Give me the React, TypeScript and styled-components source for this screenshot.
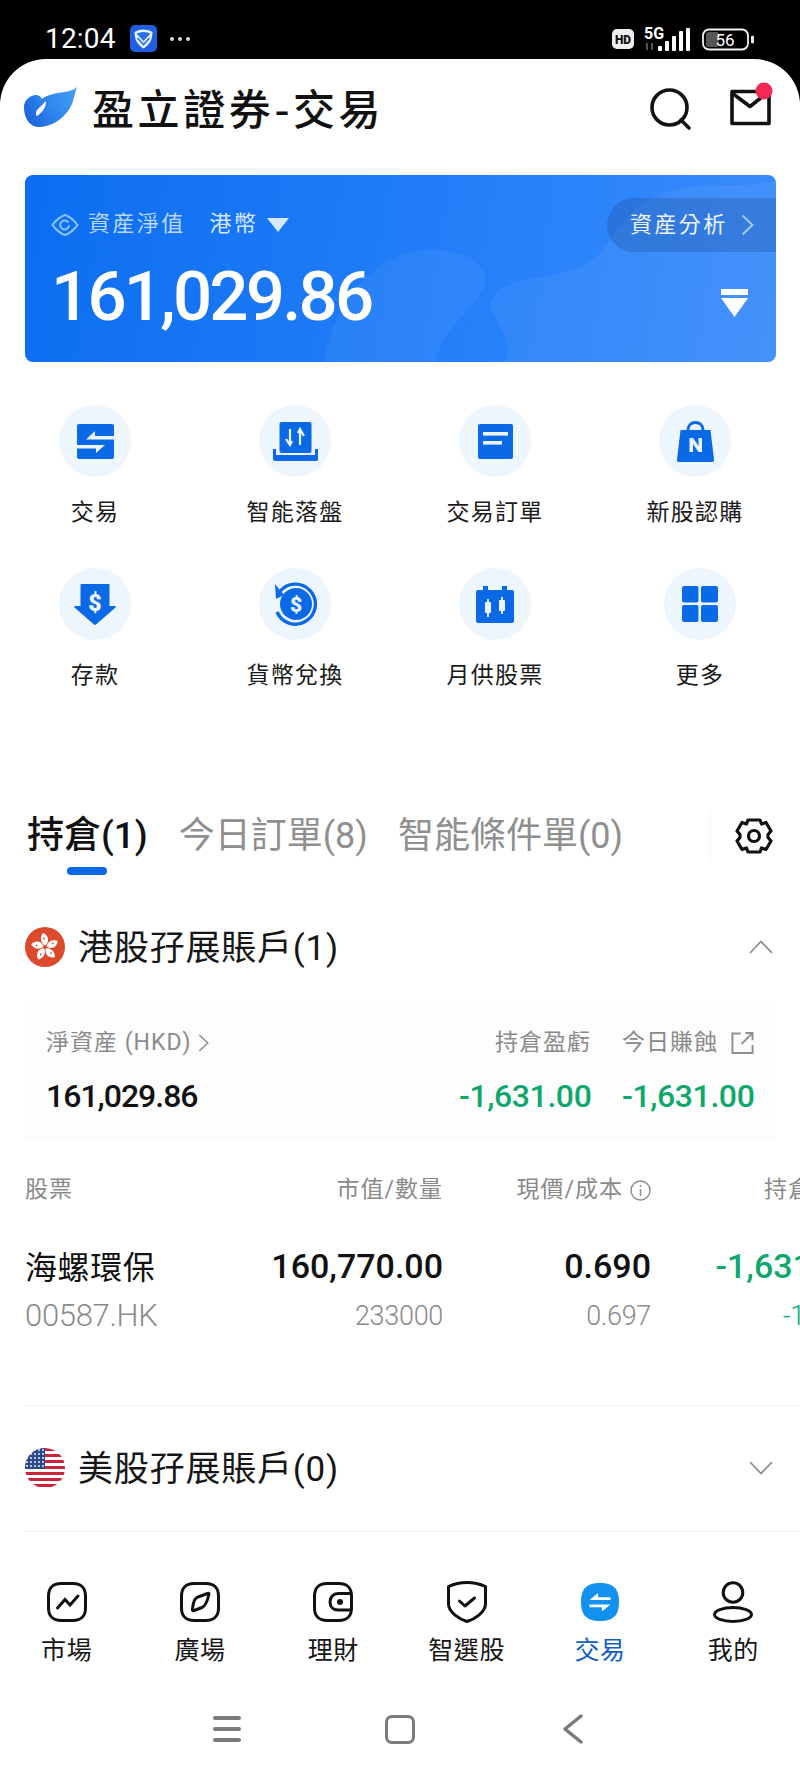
import React from 'react';
import styled, { createGlobalStyle } from 'styled-components';

const BLUE = '#0a6ae6';
const GREY = '#8a8a8a';
const GREEN = '#0fa76b';

const GlobalStyle = createGlobalStyle`
  html, body {
    margin: 0;
    padding: 0;
    background: #000;
  }
  * {
    box-sizing: border-box;
  }
`;

// Page frame

const Page = styled.div`
  width: 800px;
  height: 1778px;
  overflow: hidden;
  background: #000;
  color: #111;
  font-family: Roboto, 'Noto Sans CJK TC', sans-serif;
`;

const StatusBar = styled.div`
  height: 59px;
  padding: 25px 46px 0 45px;
  display: flex;
  align-items: flex-start;
  color: #fff;
`;

const Clock = styled.span`
  font-size: 28px;
  line-height: 28px;
  letter-spacing: 0.2px;
`;

const StatusDots = styled.span`
  display: flex;
  gap: 4px;
  margin: 12px 0 0 13px;
  & > i {
    width: 4px;
    height: 4px;
    border-radius: 50%;
    background: #ddd;
  }
`;

const StatusRight = styled.div`
  margin-left: auto;
  display: flex;
  align-items: flex-start;
`;

const Panel = styled.div`
  height: 1719px;
  background: #fff;
  border-radius: 46px 46px 0 0;
  padding: 0 24px;
`;

// Header

const Header = styled.header`
  height: 116px;
  display: flex;
  align-items: flex-start;
  padding-top: 28px;
`;

const AppTitle = styled.h1`
  margin: -3px 0 0 14px;
  font-family: 'Noto Sans CJK TC', sans-serif;
  font-size: 42px;
  line-height: 46px;
  font-weight: 500;
  letter-spacing: 3.6px;
  color: #111;
`;

const HeaderIcons = styled.div`
  margin-left: auto;
  display: flex;
  gap: 37px;
  align-items: flex-start;
`;

// Balance card

const Card = styled.section`
  position: relative;
  height: 187px;
  margin: 0 0 0 1px;
  width: 751px;
  border-radius: 8px;
  overflow: hidden;
  background: linear-gradient(100deg, #0b6df0 0%, #2580f9 60%, #3a8cfb 100%);
  color: #fff;
  padding: 23px 28px 0 26px;
`;

const CardDecor = styled.svg`
  position: absolute;
  inset: 0;
`;

const CardContent = styled.div`
  position: relative;
  display: flex;
  flex-direction: column;
`;

const CardLabelRow = styled.div`
  display: flex;
  align-items: center;
  height: 54px;
  line-height: 50px;
`;

const CardLabel = styled.span`
  font-size: 22px;
  letter-spacing: 2.4px;
  color: #b8d8ff;
  margin: -2px 0 0 9px;
`;

const Currency = styled.span`
  font-size: 22px;
  letter-spacing: 2.4px;
  color: #d6e8ff;
  margin: -2px 9px 0 24px;
`;

const AnalysisPill = styled.div`
  position: absolute;
  top: 0;
  right: -28px;
  width: 169px;
  height: 54px;
  border-radius: 27px 0 0 27px;
  background: rgba(30, 80, 160, 0.32);
  display: flex;
  align-items: center;
  padding-left: 23px;
  font-size: 22px;
  letter-spacing: 2.4px;
  color: #eef6ff;
  gap: 13px;
`;

const BalanceRow = styled.div`
  display: flex;
  align-items: center;
  justify-content: space-between;
  margin-top: 10px;
  height: 70px;
`;

const Balance = styled.div`
  font-size: 69px;
  line-height: 70px;
  letter-spacing: -2.8px;
  font-weight: 500;
`;

// Shortcuts

const ShortcutGrid = styled.div`
  display: grid;
  grid-template-columns: repeat(4, 200px);
  row-gap: 42px;
  margin: 43px 0 0 -29px;
`;

const Shortcut = styled.div<{ $nudge?: boolean }>`
  display: flex;
  flex-direction: column;
  align-items: center;
  gap: 17px;
  padding-left: ${(p) => (p.$nudge ? 10 : 0)}px;
`;

const ShortcutCircle = styled.div`
  width: 72px;
  height: 72px;
  border-radius: 50%;
  background: #eef6fd;
  display: flex;
  align-items: center;
  justify-content: center;
`;

const ShortcutLabel = styled.span`
  font-family: 'Noto Sans CJK TC', sans-serif;
  font-size: 23px;
  line-height: 32px;
  letter-spacing: 1.2px;
  color: #1a1a1a;
`;

// Tabs

const TabBar = styled.div`
  position: relative;
  display: flex;
  align-items: flex-start;
  margin-top: 123px;
  height: 63px;
  padding-left: 3px;
`;

const Tab = styled.div<{ $active?: boolean }>`
  display: flex;
  flex-direction: column;
  align-items: center;
  font-size: ${(p) => (p.$active ? 37 : 36)}px;
  line-height: 48px;
  font-weight: ${(p) => (p.$active ? 500 : 400)};
  color: ${(p) => (p.$active ? '#111' : '#8f8f8f')};
  margin-right: ${(p) => (p.$active ? 31 : 30)}px;
  white-space: nowrap;
`;

const TabMark = styled.i`
  width: 40px;
  height: 8px;
  border-radius: 4px;
  background: ${BLUE};
  margin-top: 7px;
`;

const TabSettings = styled.div`
  position: absolute;
  right: 0;
  top: -6px;
  width: 64px;
  height: 60px;
  background: #fff;
  box-shadow: -7px 0 8px -6px rgba(0, 0, 0, 0.05);
  display: flex;
  align-items: center;
  justify-content: flex-end;
  padding-right: 3px;
`;

// Account sections

const SectionHead = styled.div<{ $top: number }>`
  display: flex;
  align-items: center;
  height: 48px;
  margin-top: ${(p) => p.$top}px;
  padding-left: 1px;
`;

const SectionTitle = styled.span`
  font-size: 35px;
  line-height: 48px;
  margin: 3px 0 0 13px;
  letter-spacing: 0.8px;
  color: #161616;
`;

const SectionChevron = styled.svg`
  margin-left: auto;
  margin-right: 3px;
`;

const Summary = styled.div`
  margin-top: 29px;
  height: 140px;
  background: #fefdfe;
  padding: 27px 22px 0 22px;
  display: grid;
  grid-template-columns: 1fr 132px 132px;
  column-gap: 31px;
  row-gap: 17px;
  grid-template-rows: 32px 40px;
`;

const SummaryLabel = styled.div<{ $right?: boolean }>`
  font-size: 23px;
  line-height: 32px;
  letter-spacing: 1px;
  color: ${GREY};
  display: flex;
  align-items: center;
  white-space: nowrap;
  justify-content: ${(p) => (p.$right ? 'flex-end' : 'flex-start')};
  gap: 6px;
`;

const SummaryValue = styled.div<{ $green?: boolean }>`
  font-size: 32px;
  line-height: 40px;
  font-weight: 500;
  letter-spacing: ${(p) => (p.$green ? -0.4 : -1)}px;
  white-space: nowrap;
  text-align: ${(p) => (p.$green ? 'right' : 'left')};
  color: ${(p) => (p.$green ? GREEN : '#111')};
`;

// Holdings table

const Table = styled.div`
  margin: 35px -24px 0 0;
  overflow: hidden;
  display: grid;
  grid-template-columns: 201px 218px 208px 209px;
`;

const HeadCell = styled.div<{ $left?: boolean }>`
  font-size: 23px;
  line-height: 30px;
  letter-spacing: 1px;
  color: ${GREY};
  display: flex;
  align-items: center;
  justify-content: ${(p) => (p.$left ? 'flex-start' : 'flex-end')};
  white-space: nowrap;
  gap: 7px;
  padding-left: 1px;
`;

const MainCell = styled.div<{ $left?: boolean; $green?: boolean }>`
  margin-top: 39px;
  height: 44px;
  padding: ${(p) => (p.$left ? '2px 0 0 1px' : '0')};
  font-size: ${(p) => (p.$left ? 32 : 34)}px;
  line-height: 44px;
  font-weight: ${(p) => (p.$left ? 400 : 500)};
  letter-spacing: ${(p) => (p.$left ? 0.6 : 0)}px;
  text-align: ${(p) => (p.$left ? 'left' : 'right')};
  color: ${(p) => (p.$green ? GREEN : '#111')};
  white-space: nowrap;
`;

const SubCell = styled.div<{ $left?: boolean; $green?: boolean }>`
  margin-top: 10px;
  font-size: ${(p) => (p.$left ? 31 : 27)}px;
  line-height: 36px;
  font-weight: 300;
  letter-spacing: -0.3px;
  text-align: ${(p) => (p.$left ? 'left' : 'right')};
  color: ${(p) => (p.$green ? GREEN : GREY)};
  white-space: nowrap;
  padding-left: 1px;
`;

const Divider = styled.div<{ $top: number }>`
  height: 1px;
  margin: ${(p) => p.$top}px -24px 0 0;
  background: #f2f2f2;
`;

// Bottom navigation

const BottomNav = styled.nav`
  display: grid;
  grid-template-columns: repeat(6, 133.33px);
  margin: 50px 0 0 -24px;
`;

const NavItem = styled.div<{ $active?: boolean }>`
  display: flex;
  flex-direction: column;
  align-items: center;
  gap: 10px;
  font-family: 'Noto Sans CJK TC', sans-serif;
  font-size: 25px;
  line-height: 32px;
  letter-spacing: 0.6px;
  color: ${(p) => (p.$active ? '#1260bd' : '#161616')};
`;

const NavIcon = styled.div`
  height: 40px;
  display: flex;
  align-items: center;
  justify-content: center;
`;

const SystemBar = styled.div`
  margin: 50px 0 0 -24px;
  width: 800px;
  padding-left: 213px;
  display: flex;
  align-items: center;
`;

const MenuBars = styled.div`
  width: 28px;
  height: 26px;
  display: flex;
  flex-direction: column;
  justify-content: space-between;
  & > i {
    height: 4px;
    border-radius: 2px;
    background: #7a7a7a;
  }
`;

const HomeSquare = styled.div`
  width: 30px;
  height: 29px;
  margin-left: 144px;
  border: 3.5px solid #7a7a7a;
  border-radius: 7px;
`;

const BackArrow = styled.svg`
  margin-left: 148px;
`;

// Icon drawings

const ShieldSvg = styled.svg`
  margin-left: 14px;
`;

const StatusSvg = styled.svg`
  margin: 1px -2px 0 0;
`;

const MailSvg = styled.svg`
  margin: -5px -1px 0 0;
`;

const CollapseSvg = styled.svg`
  margin: 12px 0 0 0;
`;

const ExternalSvg = styled.svg`
  margin-left: 7px;
`;

function AppLogo() {
  return (
    <svg width="54" height="41" viewBox="0 0 54 41">
      <defs>
        <linearGradient id="lg" x1="0" y1="0.7" x2="1" y2="0.2">
          <stop offset="0" stopColor="#1c62da" />
          <stop offset="0.4" stopColor="#2c82ec" />
          <stop offset="1" stopColor="#429cf6" />
        </linearGradient>
      </defs>
      <path d="M0 20C0 13 6 8 12 8C15 8 17 10 18 12C23 8 32 6 40 5C46 4 50 3 53 0C50 8 50 16 44 24C36 35 24 40 15 40C6 40 0 32 0 20Z" fill="url(#lg)" />
      <path d="M22 14C22 19 20 24 13 29C11 28 12 24 14 22C16 20 19 17 22 14Z" fill="#fff" />
    </svg>
  );
}

function ShieldApp() {
  return (
    <ShieldSvg width="27" height="27" viewBox="0 0 27 27">
      <rect width="27" height="27" rx="5" fill="#1f5fe0" />
      <path d="M13.5 4.5C10 4.5 7 5.5 4.5 7C4.5 15 8 20.5 13.5 23.5C19 20.5 22.5 15 22.5 7C20 5.5 17 4.5 13.5 4.5Z" fill="#e6f3ff" />
      <path d="M6.5 8.5C11 6.5 16 6.5 20.5 8.5L13.5 16Z" fill="#2a6ee8" />
      <path d="M7.5 13L13.5 19.5L19.5 13" fill="none" stroke="#2a6ee8" strokeWidth="1.6" />
    </ShieldSvg>
  );
}

function StatusIcons() {
  return (
    <StatusSvg width="144" height="28" viewBox="0 0 144 28">
      <rect x="0" y="3" width="22" height="20" rx="5" fill="#eee" />
      <text x="11" y="17.5" fontSize="12" fontWeight="900" textAnchor="middle" fontFamily="Roboto" fill="#111">HD</text>
      <text x="32" y="13" fontSize="16" fontWeight="700" fontFamily="Roboto" fill="#fff">5G</text>
      <path d="M35 17v7M40 24v-7" stroke="#777" strokeWidth="1.4" />
      <rect x="46" y="20" width="4" height="5" rx="1" fill="#fff" />
      <rect x="53" y="15" width="4" height="10" rx="1" fill="#fff" />
      <rect x="60" y="10" width="4" height="15" rx="1" fill="#fff" />
      <rect x="67" y="5" width="4" height="20" rx="1" fill="#fff" />
      <rect x="74" y="2" width="4" height="23" rx="1" fill="#fff" />
      <rect x="91" y="3.5" width="45" height="20" rx="6" fill="none" stroke="#f2f2f2" strokeWidth="1.8" />
      <rect x="94" y="6" width="13" height="15" rx="2.5" fill="#555" />
      <text x="113" y="20" fontSize="17" textAnchor="middle" fontFamily="Roboto" fill="#fff">56</text>
      <rect x="139" y="9.5" width="3" height="8" rx="1.5" fill="#eee" />
    </StatusSvg>
  );
}

function SearchIcon() {
  return (
    <svg width="42" height="44" viewBox="0 0 42 44" fill="none" stroke="#111" strokeWidth="3.6" strokeLinecap="round">
      <circle cx="19.5" cy="20.5" r="17.5" />
      <path d="M31 33l8 8" />
    </svg>
  );
}

function MailIcon() {
  return (
    <MailSvg width="48" height="48" viewBox="0 0 48 48" fill="none">
      <path d="M3 9.5H40V41.5H3Z" stroke="#111" strokeWidth="3.6" strokeLinejoin="round" />
      <path d="M3 11L21 24.5L38 11" stroke="#111" strokeWidth="3.6" strokeLinejoin="round" />
      <circle cx="35" cy="9" r="8.5" fill="#f02a55" />
    </MailSvg>
  );
}

function EyeIcon() {
  return (
    <svg width="28" height="24" viewBox="0 0 28 24" fill="none" stroke="#8cc2ff" strokeWidth="2">
      <path d="M14 2C18 3 24 8 26.5 12C24 16 18 21 14 22C10 21 4 16 1.5 12C4 8 10 3 14 2Z" />
      <path d="M17 9A4.5 4.5 0 1 0 18 13" strokeLinecap="round" />
    </svg>
  );
}

function CaretDown() {
  return (
    <svg width="22" height="14" viewBox="0 0 22 14">
      <path d="M0 0H22L11 14Z" fill="#d7e9ff" />
    </svg>
  );
}

function ChevronRight({ color = '#a9cdfb', w = 13, h = 22 }: { color?: string; w?: number; h?: number }) {
  return (
    <svg width={w} height={h} viewBox="0 0 13 22" fill="none" stroke={color} strokeWidth="1.8">
      <path d="M1.5 1.5L11.5 11L1.5 20.5" />
    </svg>
  );
}

function CollapseIcon() {
  return (
    <CollapseSvg width="27" height="28" viewBox="0 0 27 28">
      <rect x="0" y="0" width="27" height="6" fill="#fff" />
      <path d="M0 9H27L13.5 28Z" fill="#fff" />
    </CollapseSvg>
  );
}

function TradeIcon() {
  return (
    <svg width="37" height="35" viewBox="0 0 37 35">
      <rect width="37" height="35" rx="2" fill={BLUE} />
      <path d="M9 15.5L18 7V12H37V15.5Z" fill="#eef6fd" />
      <path d="M0 21H28L19 29V24.5H0Z" fill="#eef6fd" />
    </svg>
  );
}

function SmartIcon() {
  return (
    <svg width="45" height="39" viewBox="0 0 45 39">
      <rect x="6.5" y="0" width="32" height="31" rx="2" fill={BLUE} />
      <path d="M0 27H3V33H42V27H45V37A2 2 0 0 1 43 39H2A2 2 0 0 1 0 37Z" fill={BLUE} />
      <path d="M17 7V22M13 17L17 23L19 19M27 23V8M31 14L27 7L25 11" fill="none" stroke="#eef6fd" strokeWidth="2.2" />
    </svg>
  );
}

function OrderIcon() {
  return (
    <svg width="35" height="35" viewBox="0 0 35 35">
      <rect width="35" height="35" rx="2" fill={BLUE} />
      <rect x="5" y="8" width="25" height="3.6" fill="#eef6fd" />
      <rect x="5" y="17" width="19" height="3.6" fill="#eef6fd" />
    </svg>
  );
}

function BagIcon() {
  return (
    <svg width="37" height="41" viewBox="0 0 37 41">
      <path d="M11 9C11 -1 26 -1 26 9" fill="none" stroke={BLUE} strokeWidth="3" />
      <path d="M3.5 9H33.5L37 38.5A2 2 0 0 1 35 41H2A2 2 0 0 1 0 38.5Z" fill={BLUE} />
      <path d="M12.5 31V17H16L21.5 25V17H25V31H21.5L16 23V31Z" fill="#eef6fd" />
    </svg>
  );
}

function DepositIcon() {
  return (
    <svg width="42" height="41" viewBox="0 0 42 41">
      <path d="M6.5 1A1 1 0 0 1 7.5 0H34.5A1 1 0 0 1 35.5 1V22H41C42 22 42 23 41.5 23.5L22 40.5C21.5 41 20.5 41 20 40.5L0.5 23.5C0 23 0 22 1 22H6.5Z" fill={BLUE} />
      <text x="21" y="27" fontSize="23" fontWeight="900" textAnchor="middle" fontFamily="Roboto" fill="#eef6fd">$</text>
    </svg>
  );
}

function ExchangeIcon() {
  return (
    <svg width="44" height="44" viewBox="0 0 44 44">
      <circle cx="23" cy="22" r="16" fill={BLUE} />
      <path d="M6.5 10A20 20 0 1 1 4 30" fill="none" stroke={BLUE} strokeWidth="3.4" />
      <path d="M2 2L3 17L11 13Z" fill={BLUE} />
      <text x="23" y="29.5" fontSize="21" fontWeight="900" textAnchor="middle" fontFamily="Roboto" fill="#eef6fd">$</text>
    </svg>
  );
}

function MonthlyIcon() {
  return (
    <svg width="38" height="37" viewBox="0 0 38 37">
      <rect x="7" y="0" width="5" height="6" fill={BLUE} />
      <rect x="26" y="0" width="5" height="6" fill={BLUE} />
      <rect x="0" y="4" width="38" height="33" rx="2" fill={BLUE} />
      <path d="M12 13V31M26 11V28" stroke="#eef6fd" strokeWidth="1.8" />
      <rect x="9" y="16" width="6" height="11" rx="1" fill="#eef6fd" />
      <rect x="23" y="14" width="6" height="11" rx="1" fill="#eef6fd" />
    </svg>
  );
}

function MoreIcon() {
  return (
    <svg width="36" height="36" viewBox="0 0 36 36" fill={BLUE}>
      <rect width="16.5" height="16.5" rx="2" />
      <rect x="19" width="17" height="16.5" rx="2" />
      <rect y="19" width="16.5" height="17" rx="2" />
      <rect x="19" y="19" width="17" height="17" rx="2" />
    </svg>
  );
}

function GearIcon() {
  return (
    <svg width="38" height="38" viewBox="0 0 38 38" fill="none" stroke="#111" strokeWidth="3.2" strokeLinejoin="round">
      <path d="M13 3H25L26.5 7L31 5.5L36 14L33 17.5V20.5L36 24L31 32.5L26.5 31L25 35H13L11.5 31L7 32.5L2 24L5 20.5V17.5L2 14L7 5.5L11.5 7Z" />
      <circle cx="19" cy="19" r="5.5" />
    </svg>
  );
}

function HkFlag() {
  const petals = [0, 72, 144, 216, 288];
  return (
    <svg width="40" height="40" viewBox="0 0 40 40">
      <circle cx="20" cy="20" r="20" fill="#dc4a2e" />
      {petals.map((a) => (
        <g key={a} transform={`rotate(${a} 20 20)`}>
          <path d="M20 18.5C15.5 16 14.5 10.5 18 6C22.5 8 24.5 12 22 16.5Z" fill="#fff" />
          <circle cx="19" cy="11.5" r="0.9" fill="#dc4a2e" />
        </g>
      ))}
    </svg>
  );
}

function UsFlag() {
  const stripes = [0, 1, 2, 3, 4, 5, 6];
  return (
    <svg width="40" height="40" viewBox="0 0 40 40">
      <defs>
        <clipPath id="usclip">
          <circle cx="20" cy="20" r="20" />
        </clipPath>
        <pattern id="stars" width="4" height="4" patternUnits="userSpaceOnUse">
          <circle cx="2" cy="2" r="0.9" fill="#fff" />
        </pattern>
      </defs>
      <g clipPath="url(#usclip)">
        <rect width="40" height="40" fill="#fff" />
        {stripes.map((i) => (
          <rect key={i} y={i * 6} width="40" height="3" fill="#c8243c" />
        ))}
        <rect width="20" height="21" fill="#2a4a8c" />
        <rect width="20" height="21" fill="url(#stars)" />
      </g>
    </svg>
  );
}

function ChevronUpDown({ up }: { up?: boolean }) {
  return (
    <SectionChevron width="24" height="14" viewBox="0 0 24 14" fill="none" stroke="#8c8c8c" strokeWidth="1.8">
      <path d={up ? 'M1 13L12 1.5L23 13' : 'M1 1L12 12.5L23 1'} />
    </SectionChevron>
  );
}

function ExternalIcon() {
  return (
    <ExternalSvg width="24" height="24" viewBox="0 0 24 24" fill="none" stroke="#8f8f8f" strokeWidth="2">
      <path d="M10 2H1.5V22.5H22.5V14" />
      <path d="M11 13L22.5 1.5M15 1.5H22.5V9" />
    </ExternalSvg>
  );
}

function InfoIcon() {
  return (
    <svg width="21" height="21" viewBox="0 0 21 21" fill="none" stroke="#8f8f8f" strokeWidth="1.5">
      <circle cx="10.5" cy="10.5" r="9.5" />
      <path d="M10.5 9V16M10.5 5V7" />
    </svg>
  );
}

const NavStroke = { fill: 'none', stroke: '#111', strokeWidth: 3 };
const ROUNDED = 'M14 1.5H26C34 1.5 38.5 6 38.5 14V26C38.5 34 34 38.5 26 38.5H14C6 38.5 1.5 34 1.5 26V14C1.5 6 6 1.5 14 1.5Z';
const SQUIRCLE = 'M20 0C33 0 40 5 40 20C40 35 33 40 20 40C7 40 0 35 0 20C0 5 7 0 20 0Z';

function NavMarket() {
  return (
    <svg width="40" height="40" viewBox="0 0 40 40" {...NavStroke}>
      <path d={ROUNDED} />
      <path d="M10.5 26L18 17.5L23 23L31 14" strokeLinecap="round" />
    </svg>
  );
}

function NavSquare() {
  return (
    <svg width="40" height="40" viewBox="0 0 40 40" {...NavStroke}>
      <path d={ROUNDED} />
      <path d="M29 12C29 11 28.5 11 27.5 11.5L18 15C15 16 14 18 12.5 26C12 28 12.5 29 14 28.5L22 25.5C25 24.5 27 21 29 12Z" strokeLinejoin="round" />
    </svg>
  );
}

function NavWealth() {
  return (
    <svg width="40" height="40" viewBox="0 0 40 40" {...NavStroke}>
      <path d={ROUNDED} />
      <path d="M38.5 11.5H25C20.5 11.5 17 15 17 20C17 25 20.5 28 25 28H38.5" />
      <circle cx="27" cy="20" r="3" fill="#111" stroke="none" />
    </svg>
  );
}

function NavPicks() {
  return (
    <svg width="40" height="42" viewBox="0 0 40 42" {...NavStroke}>
      <path d="M20 1.5C26 1.5 33 3 38.5 5.5V23C38.5 31 28 38 20 40.5C12 38 1.5 31 1.5 23V5.5C7 3 14 1.5 20 1.5Z" strokeLinejoin="round" />
      <path d="M12.5 20L18 25L27.5 17" strokeLinecap="round" strokeLinejoin="round" />
    </svg>
  );
}

function NavTrade() {
  return (
    <svg width="38" height="38" viewBox="0 0 40 40">
      <path d={SQUIRCLE} fill="#1291ee" />
      <path d="M9 18L18 10.5V15H31V18Z" fill="#fff" />
      <path d="M9 22.5H31L22 30V25.5H9Z" fill="#fff" />
    </svg>
  );
}

function NavMine() {
  return (
    <svg width="40" height="42" viewBox="0 0 40 42" {...NavStroke}>
      <circle cx="20" cy="11.5" r="9.8" />
      <ellipse cx="20" cy="33.5" rx="18.5" ry="7" />
    </svg>
  );
}

const shortcuts = [
  { label: '交易', icon: <TradeIcon /> },
  { label: '智能落盤', icon: <SmartIcon /> },
  { label: '交易訂單', icon: <OrderIcon /> },
  { label: '新股認購', icon: <BagIcon /> },
  { label: '存款', icon: <DepositIcon /> },
  { label: '貨幣兌換', icon: <ExchangeIcon /> },
  { label: '月供股票', icon: <MonthlyIcon /> },
  { label: '更多', icon: <MoreIcon />, nudge: true },
];

const navItems = [
  { label: '市場', icon: <NavMarket /> },
  { label: '廣場', icon: <NavSquare /> },
  { label: '理財', icon: <NavWealth /> },
  { label: '智選股', icon: <NavPicks /> },
  { label: '交易', icon: <NavTrade />, active: true },
  { label: '我的', icon: <NavMine /> },
];

export default function App() {
  return (
    <Page>
      <GlobalStyle />
      <StatusBar>
        <Clock>12:04</Clock>
        <ShieldApp />
        <StatusDots>
          <i />
          <i />
          <i />
        </StatusDots>
        <StatusRight>
          <StatusIcons />
        </StatusRight>
      </StatusBar>

      <Panel>
        <Header>
          <AppLogo />
          <AppTitle>盈立證券-交易</AppTitle>
          <HeaderIcons>
            <SearchIcon />
            <MailIcon />
          </HeaderIcons>
        </Header>

        <Card>
          <CardDecor width="751" height="187" viewBox="0 0 751 187">
            <path d="M300 187C305 130 350 78 400 75C440 73 465 88 460 110C445 140 420 150 410 187Z" fill="#fff" fillOpacity="0.05" />
            <path d="M465 130C470 100 530 105 560 90C590 75 590 30 650 15C690 5 720 15 751 5V187H480C490 165 470 150 465 130Z" fill="#fff" fillOpacity="0.055" />
          </CardDecor>
          <CardContent>
            <CardLabelRow>
              <EyeIcon />
              <CardLabel>資産淨值</CardLabel>
              <Currency>港幣</Currency>
              <CaretDown />
              <AnalysisPill>
                資産分析
                <ChevronRight />
              </AnalysisPill>
            </CardLabelRow>
            <BalanceRow>
              <Balance>161,029.86</Balance>
              <CollapseIcon />
            </BalanceRow>
          </CardContent>
        </Card>

        <ShortcutGrid>
          {shortcuts.map((s) => (
            <Shortcut key={s.label} $nudge={s.nudge}>
              <ShortcutCircle>{s.icon}</ShortcutCircle>
              <ShortcutLabel>{s.label}</ShortcutLabel>
            </Shortcut>
          ))}
        </ShortcutGrid>

        <TabBar>
          <Tab $active>
            持倉(1)
            <TabMark />
          </Tab>
          <Tab>今日訂單(8)</Tab>
          <Tab>智能條件單(0)</Tab>
          <TabSettings>
            <GearIcon />
          </TabSettings>
        </TabBar>

        <SectionHead $top={48}>
          <HkFlag />
          <SectionTitle>港股孖展賬戶(1)</SectionTitle>
          <ChevronUpDown up />
        </SectionHead>

        <Summary>
          <SummaryLabel>
            淨資産 (HKD)
            <ChevronRight color="#8f8f8f" w={11} h={20} />
          </SummaryLabel>
          <SummaryLabel $right>持倉盈虧</SummaryLabel>
          <SummaryLabel>
            今日賺蝕
            <ExternalIcon />
          </SummaryLabel>
          <SummaryValue>161,029.86</SummaryValue>
          <SummaryValue $green>-1,631.00</SummaryValue>
          <SummaryValue $green>-1,631.00</SummaryValue>
        </Summary>

        <Table>
          <HeadCell $left>股票</HeadCell>
          <HeadCell>市值/數量</HeadCell>
          <HeadCell>
            現價/成本
            <InfoIcon />
          </HeadCell>
          <HeadCell>持倉盈虧</HeadCell>

          <MainCell $left>海螺環保</MainCell>
          <MainCell>160,770.00</MainCell>
          <MainCell>0.690</MainCell>
          <MainCell $green>-1,631.00</MainCell>

          <SubCell $left>00587.HK</SubCell>
          <SubCell>233000</SubCell>
          <SubCell>0.697</SubCell>
          <SubCell $green>-1.00%</SubCell>
        </Table>

        <Divider $top={71} />

        <SectionHead $top={38}>
          <UsFlag />
          <SectionTitle>美股孖展賬戶(0)</SectionTitle>
          <ChevronUpDown />
        </SectionHead>

        <Divider $top={39} />

        <BottomNav>
          {navItems.map((n) => (
            <NavItem key={n.label} $active={n.active}>
              <NavIcon>{n.icon}</NavIcon>
              {n.label}
            </NavItem>
          ))}
        </BottomNav>

        <SystemBar>
          <MenuBars>
            <i />
            <i />
            <i />
          </MenuBars>
          <HomeSquare />
          <BackArrow width="20" height="30" viewBox="0 0 20 30" fill="none" stroke="#7a7a7a" strokeWidth="3.5" strokeLinecap="round" strokeLinejoin="round">
            <path d="M18 2L2 15L18 28" />
          </BackArrow>
        </SystemBar>
      </Panel>
    </Page>
  );
}
